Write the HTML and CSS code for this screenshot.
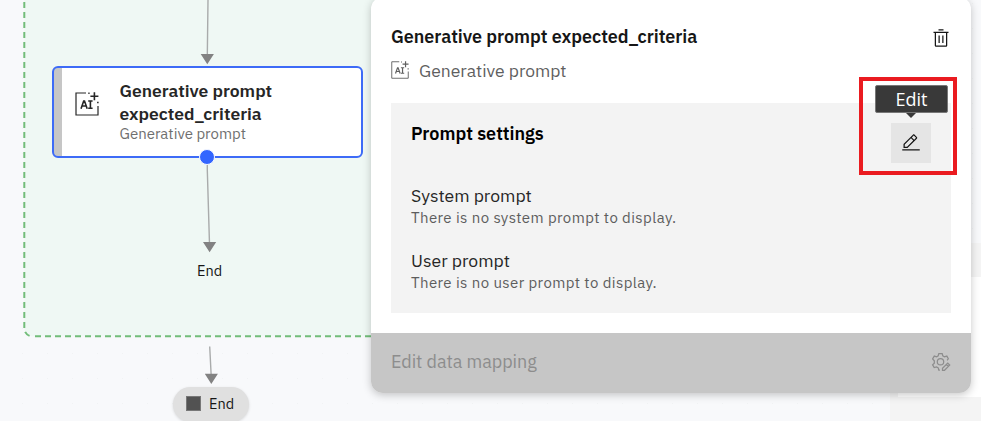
FILE: index.html
```html
<!DOCTYPE html>
<html lang="en">
<head>
<meta charset="utf-8">
<title>Flow editor</title>
<link rel="stylesheet" href="styles.css">
</head>
<body>
<svg class="defs" aria-hidden="true">
  <symbol id="ai" viewBox="0 0 24 24">
    <path d="M11 1H1V23H23V14" fill="none" stroke="currentColor" stroke-width="1.2"/>
    <path d="M19.4 0.2V8.2M15.4 4.2H23.4" fill="none" stroke="currentColor" stroke-width="1.6"/>
    <path d="M13.3 .5h1.3v1.5h-1.3zM22.1 9.8h1.5v1.5h-1.5z" fill="currentColor"/>
    <path d="M6 16.700L8.700 9H9.500L12.200 16.700M7 14H11.200M13.200 9H17.600M15.400 9V16.300M13.200 16.300H17.600" fill="none" stroke="currentColor" stroke-width="1.600"/>
  </symbol>
</svg>
<main class="canvas">
  <svg class="edges" width="981" height="421" viewBox="0 0 981 421">
    <defs>
      <pattern id="grid" x="22" y="3" width="25" height="25" patternUnits="userSpaceOnUse"><rect width="1" height="1" fill="#f1f3f4"/></pattern>
    </defs>
    <rect width="981" height="421" fill="url(#grid)"/>
    <path class="group-fill" d="M24.3 0V328.3A8 8 0 0 0 32.3 336.3H400V0Z"/>
    <path class="group-line" d="M24.3 2V328.3A8 8 0 0 0 32.3 336.3"/>
    <path class="group-line" d="M35 336.3H400"/>
    <path class="edge" d="M208 0L207.3 56M207.3 164V170L209.5 244M209.7 346.5L211.2 376"/>
    <path class="arrow" d="M200.7 54H213.9L207.3 64.3ZM203 242H216.2L209.6 252.2ZM204.8 373.8H217.9L211.3 384Z"/>
  </svg>
  <section class="node">
    <svg class="node-icon"><use href="#ai"/></svg>
    <div class="node-text">
      <h2>Generative prompt<br>expected_criteria</h2>
      <p>Generative prompt</p>
    </div>
  </section>
  <span class="port"></span>
  <span class="end-label">End</span>
  <div class="end-pill"><i></i><span>End</span></div>
  <div class="block-a"></div>
  <div class="block-b"></div>
</main>
<aside class="panel">
  <header class="panel-head">
    <h1>Generative prompt expected_criteria</h1>
    <svg class="trash" width="20" height="20" viewBox="0 0 32 32" fill="currentColor"><path d="M12 12h2v12h-2zM18 12h2v12h-2z"/><path d="M4 6v2h2v20a2 2 0 0 0 2 2h16a2 2 0 0 0 2-2V8h2V6zm4 22V8h16v20zM12 2h8v2h-8z"/></svg>
  </header>
  <div class="kind"><svg class="kind-icon"><use href="#ai"/></svg><span>Generative prompt</span></div>
  <section class="settings">
    <div class="settings-head">
      <h3>Prompt settings</h3>
      <button class="edit" aria-label="Edit prompt"><svg width="20" height="20" viewBox="0 0 32 32" fill="currentColor"><path d="M2 26h28v2H2zM25.4 9c.8-.8.8-2 0-2.800l-3.600-3.600c-.8-.8-2-.8-2.800 0l-15 15V24h6.400zm-5-5L24 7.600l-3 3L17.400 7zM6 22v-3.600l10-10 3.600 3.600-10 10z"/></svg></button>
    </div>
    <div class="field system"><h4>System prompt</h4><p>There is no system prompt to display.</p></div>
    <div class="field user"><h4>User prompt</h4><p>There is no user prompt to display.</p></div>
  </section>
  <footer class="mapping">
    <span>Edit data mapping</span>
    <svg width="20" height="20" viewBox="0 0 20 20" fill="none" stroke="currentColor" stroke-width="1.25">
      <circle cx="9.500" cy="9.700" r="3.200"/>
      <path d="M8.900 18H7.800L7.200 15.800L5.600 14.900L3.200 15.600L1.600 12.800L3.300 11.200V8.800L1.600 7L3.300 4.100L5.600 4.800L7.200 3.900L7.800 1.500H11.200L11.800 3.900L13.400 4.800L15.800 4.100L17.300 6.800L16.100 8.300"/>
      <path d="M11.500 18.300V16.300L16.700 11.100L18.700 13.100L13.500 18.300ZM15.300 12.500L17.300 14.500"/>
    </svg>
  </footer>
</aside>
<div class="callout"></div>
<div class="tooltip">Edit</div>
</body>
</html>
```
FILE: styles.css
```css
* { box-sizing: border-box; }
body { margin: 0; width: 981px; height: 421px; overflow: hidden; position: relative; background: #f8f9fb; color: #161616; font-family: "IBM Plex Sans", Roboto, "Liberation Sans", sans-serif; }
h1, h2, h3, h4, p { margin: 0; white-space: nowrap; }
.defs { position: absolute; width: 0; height: 0; }
.canvas { position: relative; width: 981px; height: 421px; overflow: hidden; }
.edges { display: block; }
.group-fill { fill: #eff8f4; }
.group-line { fill: none; stroke: #72bd79; stroke-width: 2; stroke-dasharray: 6 4; }
.edge { fill: none; stroke: #a9abab; stroke-width: 1.4; }
.arrow { fill: #828282; }

.node { position: absolute; left: 52px; top: 66px; width: 311px; height: 92px; display: flex; padding: 11px 0 0 21px; border: 2px solid #3d6bf7; border-radius: 6px; background: linear-gradient(to right, #c6c6c6 8px, #fff 8px); }
.node-icon { width: 24px; height: 24px; margin-top: 13px; flex: none; color: #262626; }
.node-text { margin-left: 20.500px; }
.node h2 { font-size: 17.500px; line-height: 23px; font-weight: 600; color: #262626; }
.node p { font-size: 15px; line-height: 17px; color: #6f6f6f; }
.port { position: absolute; left: 199px; top: 149px; width: 16px; height: 16px; border-radius: 50%; border: 1.500px solid #f5f8ff; background: #3366ff; }
.end-label { position: absolute; left: 197px; top: 261px; font-size: 14.500px; line-height: 20px; }
.end-pill { position: absolute; left: 173px; top: 387px; width: 76px; height: 35px; display: flex; align-items: center; gap: 8px; padding: 0 0 3px 13px; border-radius: 18px; background: #e0e0e0; box-shadow: 0 1px 3px #0002; font-size: 14.500px; }
.end-pill i { width: 15px; height: 15px; background: #525252; border: 1px solid #777; }
.block-a { position: absolute; left: 890px; top: 243px; width: 91px; height: 178px; background: #f4f4f4; }
.block-b { position: absolute; left: 898px; top: 277px; width: 83px; height: 120px; background: #fff; }

.panel { position: absolute; left: 371px; top: -3px; width: 600px; height: 396px; display: flex; flex-direction: column; background: #fff; border-radius: 12px; box-shadow: 0 2px 8px rgba(0, 0, 0, .22); overflow: hidden; }
.panel-head { display: flex; justify-content: space-between; align-items: center; padding: 26px 20px 0; height: 54px; }
.panel-head h1 { font-size: 18px; line-height: 24px; font-weight: 600; letter-spacing: -.03px; }
.trash { margin-top: 2px; }
.kind { display: flex; align-items: center; gap: 10px; height: 40px; padding: 0 0 2px 20px; color: #5f5f5f; font-size: 17.500px; }
.kind-icon { width: 18px; height: 18px; }
.settings { margin: 12px 20px 0; padding: 20px; height: 210px; background: #f3f3f3; }
.settings-head { display: flex; justify-content: space-between; height: 62px; }
.settings h3 { font-size: 18px; line-height: 22px; font-weight: 600; color: #000; }
.edit { width: 40px; height: 40px; padding: 0 0 1px; border: 0; background: #e5e5e5; display: grid; place-items: center; color: #161616; }
.field { height: 65px; }
.field h4 { font-size: 17.600px; line-height: 22px; font-weight: 400; color: #262626; }
.field p { font-size: 15px; line-height: 21px; letter-spacing: .4px; color: #5d5d5d; }
.mapping { margin-top: 20px; height: 60px; display: flex; align-items: center; justify-content: space-between; padding: 0 20px 3px; background: #c6c6c6; color: #8d8d8d; font-size: 18px; letter-spacing: -.05px; }

.callout { position: absolute; left: 859px; top: 77px; width: 98px; height: 98px; border: 4px solid #ea1b20; }
.tooltip { position: absolute; left: 875px; top: 85px; width: 73px; height: 28px; border: 1px solid #777; border-radius: 2px; background: #393939; color: #fff; font: 18px/26px "Open Sans", "Noto Sans", sans-serif; text-align: center; }
.tooltip::after { content: ""; position: absolute; left: 30px; top: 27px; border: 5.500px solid transparent; border-bottom: 0; border-top-color: #393939; }
```
